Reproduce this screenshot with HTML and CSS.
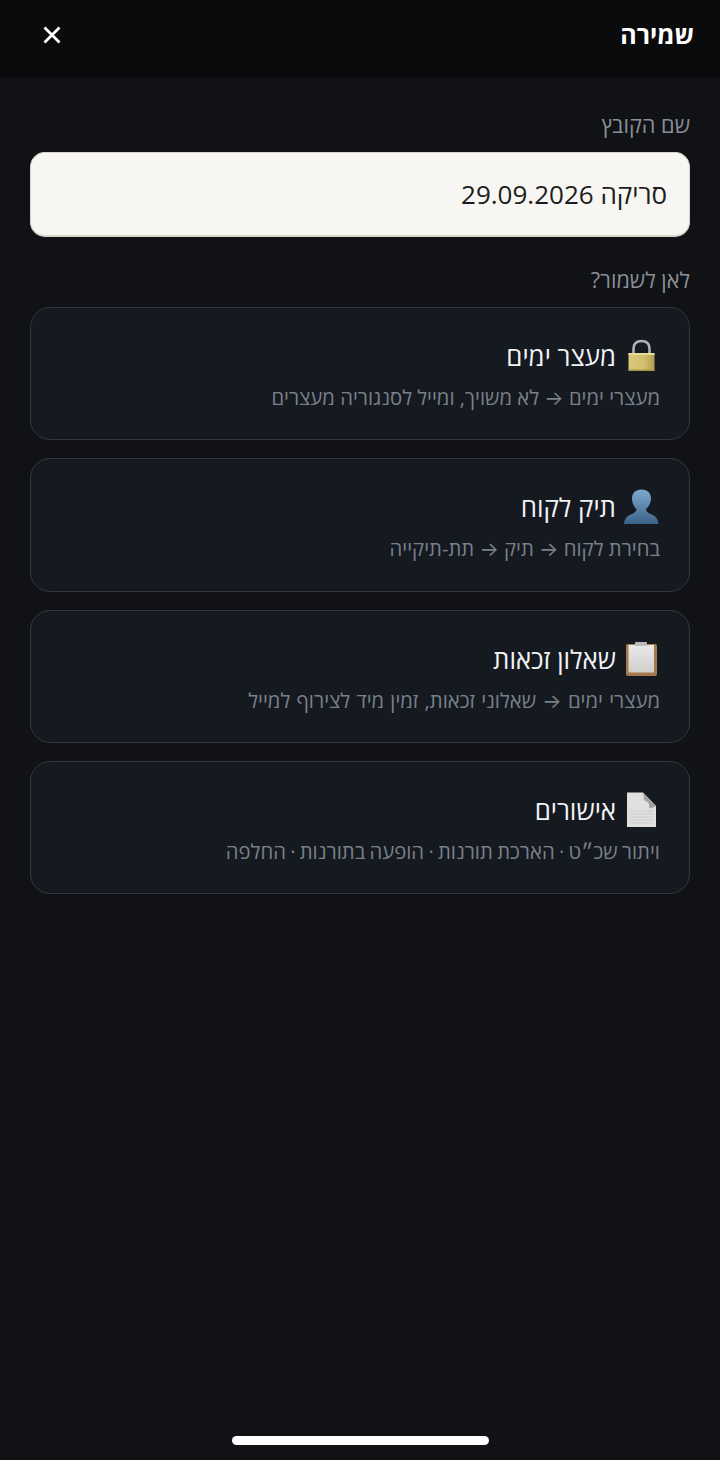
FILE: index.html
```html
<!DOCTYPE html>
<html lang="he" dir="rtl">
<head>
<meta charset="UTF-8">
<meta name="viewport" content="width=device-width, initial-scale=1.0">
<title>שמירה</title>
<link rel="stylesheet" href="styles.css">
</head>
<body>

<div class="s_header">
    <div class="s_title">שמירה</div>
    <svg class="s_close" width="20" height="20" viewBox="0 0 20 20">
        <path d="M2.5 2.5L17.5 17.5M17.5 2.5L2.5 17.5" stroke="#fff" stroke-width="2.8" fill="none"/>
    </svg>
</div>

<div class="s_content">
    <div class="s_label">שם הקובץ</div>
    <div class="s_input">סריקה 29.09.2026</div>

    <div class="s_label s_label-second">לאן לשמור?</div>
    <div class="s_list">
        <div class="s_card">
            <div class="s_card-title">
                <svg class="s_icon" width="36" height="36" viewBox="0 0 36 36">
                    <defs>
                        <linearGradient id="lockBody" x1="0" y1="0" x2="1" y2="0">
                            <stop offset="0" stop-color="#d8c878"/>
                            <stop offset="0.6" stop-color="#d2c06c"/>
                            <stop offset="1" stop-color="#b09c50"/>
                        </linearGradient>
                    </defs>
                    <path d="M9.500 16V11C9.500 5.500 12.500 3 17.500 3C22.500 3 25.500 5.500 25.500 11V16" fill="none" stroke="#aeb2b6" stroke-width="2.600"/>
                    <rect x="4.500" y="15" width="26" height="18" rx="1" fill="url(#lockBody)"/>
                    <rect x="4.500" y="15" width="26" height="2" fill="#e8dc9c"/>
                    <rect x="4.500" y="31.500" width="26" height="1.500" fill="#a8954a"/>
                </svg>
                <span>מעצר ימים</span>
            </div>
            <div class="s_card-sub">מעצרי ימים → לא משויך, ומייל לסנגוריה מעצרים</div>
        </div>
        <div class="s_card">
            <div class="s_card-title">
                <svg class="s_icon" width="36" height="36" viewBox="0 0 36 36">
                    <defs>
                        <linearGradient id="person" x1="0" y1="0" x2="0" y2="1">
                            <stop offset="0" stop-color="#7fa9d0"/>
                            <stop offset="1" stop-color="#3c6286"/>
                        </linearGradient>
                    </defs>
                    <path d="M17.500 0.500C11.500 0.500 8 4 8 9.500C8 14 10 18 12.500 20C12.500 22.500 10.500 24 7 25.500C3 27 0.500 29.500 0 35H34.500C34 29.500 31.500 27 27.500 25.500C24 24 22 22.500 22 20C24.500 18 27 14 27 9.500C27 4 23.500 0.500 17.500 0.500Z" fill="url(#person)"/>
                </svg>
                <span>תיק לקוח</span>
            </div>
            <div class="s_card-sub">בחירת לקוח → תיק → תת-תיקייה</div>
        </div>
        <div class="s_card">
            <div class="s_card-title">
                <svg class="s_icon" width="36" height="36" viewBox="0 0 36 36">
                    <defs>
                        <linearGradient id="paper" x1="0" y1="0" x2="0" y2="1">
                            <stop offset="0" stop-color="#e8e8e6"/>
                            <stop offset="1" stop-color="#cfcfcc"/>
                        </linearGradient>
                    </defs>
                    <rect x="2" y="3" width="31" height="32" rx="2" fill="#a5794b"/>
                    <rect x="4.500" y="4" width="25.500" height="27.500" fill="url(#paper)"/>
                    <rect x="11" y="1" width="12" height="4" rx="1" fill="#b9bcbf"/>
                </svg>
                <span>שאלון זכאות</span>
            </div>
            <div class="s_card-sub s_card-sub-wide">מעצרי ימים → שאלוני זכאות, זמין מיד לצירוף למייל</div>
        </div>
        <div class="s_card">
            <div class="s_card-title">
                <svg class="s_icon" width="36" height="36" viewBox="0 0 36 36">
                    <path d="M3 0.500H19L32 14V35H3Z" fill="#e0e0e0"/>
                    <path d="M19 0.500L32 14C30 15.500 27 16.500 25 15.500C26 12.500 24 9 20 8.500C20 6 19.500 3 19 0.500Z" fill="#a2a2a2"/>
                    <path d="M6 19H29M6 22H29M6 25H29M6 28H29M6 31H29" stroke="#cccccc" stroke-width="1"/>
                </svg>
                <span>אישורים</span>
            </div>
            <div class="s_card-sub s_card-sub-tight">ויתור שכ״ט · הארכת תורנות · הופעה בתורנות · החלפה</div>
        </div>
    </div>
</div>

<div class="s_home-bar"></div>

</body>
</html>
```

FILE: styles.css
```css
body {
    margin: 0;
    padding: 0;
    height: 1460px;
    position: relative;
    overflow: hidden;
    background-color: #101216;
    font-family: "Open Sans", "Inter", "Noto Sans", "Liberation Sans", sans-serif;
}

.s_header {
    height: 78px;
    box-sizing: border-box;
    padding: 0 26px 8px 40px;
    display: flex;
    align-items: center;
    justify-content: space-between;
    background-color: #0a0b0d;
}

.s_title {
    padding-bottom: 2px;
    font-size: 25px;
    font-weight: 700;
    color: #fff;
}

.s_close {
    display: block;
    margin-left: 2px;
}

.s_content {
    padding: 30px 30px 0;
}

.s_label {
    font-size: 21.700px;
    line-height: 34px;
    color: #8a8f98;
}

.s_label-second {
    margin-top: 26px;
}

.s_input {
    height: 85px;
    margin-top: 10px;
    box-sizing: border-box;
    padding: 0 22px;
    display: flex;
    align-items: center;
    font-size: 26px;
    color: #1c1d20;
    background-color: #f7f6f2;
    border: 1px solid #d8d6cc;
    border-bottom-width: 2px;
    border-radius: 15px;
}

.s_list {
    margin-top: 10px;
    display: flex;
    flex-direction: column;
    gap: 18px;
}

.s_card {
    height: 133.300px;
    box-sizing: border-box;
    padding: 28px 29px 0;
    background-color: #151920;
    border: 1.500px solid #323840;
    border-radius: 20px;
}

.s_card-title {
    display: flex;
    align-items: center;
    gap: 8px;
    height: 40px;
    font-size: 25.800px;
    color: #f2f3f5;
}

.s_card-sub {
    margin-top: 5px;
    font-size: 20.300px;
    line-height: 32px;
    white-space: nowrap;
    color: #7a808a;
}

.s_card-sub-wide {
    word-spacing: 1px;
}

.s_card-sub-tight {
    word-spacing: -1px;
}

.s_home-bar {
    position: absolute;
    left: 232px;
    top: 1436px;
    width: 257px;
    height: 9px;
    border-radius: 5px;
    background-color: #fff;
}
```
